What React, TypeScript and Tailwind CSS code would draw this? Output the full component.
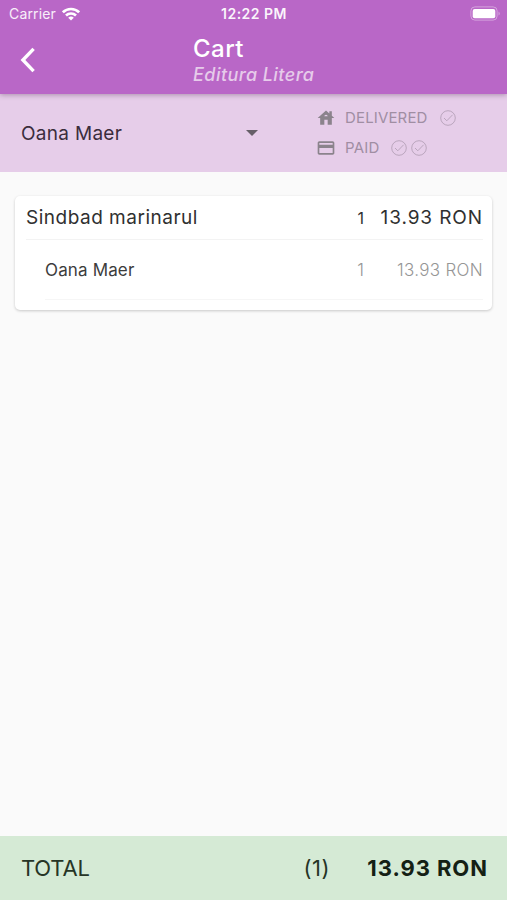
import React from "react";

function CheckCircle() {
  return (
    <svg viewBox="0 0 16 16" className="h-4 w-4 shrink-0" fill="none" stroke="#b7a3ba" strokeWidth="0.95">
      <circle cx="8" cy="8" r="7.3" />
      <path d="M4 8 6.8 10.8 12.6 4.8" />
    </svg>
  );
}

function StatusBar() {
  return (
    <div className="flex h-7 items-center">
      <div className="flex flex-1 items-center pl-[9px]">
        <span className="text-[14px] leading-none tracking-[0.15px] text-white/90">Carrier</span>
        <svg viewBox="0 0 18 14" className="ml-[6px] h-[14px] w-[18px]" fill="none" stroke="white" strokeWidth="2.6">
          <path d="M0.9 5.3a11.5 11.5 0 0 1 16.2 0" />
          <path d="M4 8.5a7.1 7.1 0 0 1 10 0" />
          <path d="M9 13.6 6.2 10.8a4 4 0 0 1 5.6 0Z" fill="white" stroke="none" />
        </svg>
      </div>
      <span className="mr-[2px] text-[14px] font-semibold leading-none tracking-[0.5px] text-white/95">12:22 PM</span>
      <div className="flex flex-1 justify-end pr-[6px] pb-px">
        <svg viewBox="0 0 31 15" className="h-[15px] w-[31px]">
          <rect x="0.9" y="0.9" width="26.2" height="13.2" rx="4" fill="none" stroke="white" strokeOpacity="0.4" />
          <rect x="2.7" y="3" width="22.6" height="9.2" rx="2" fill="white" />
          <path d="M28.6 5.4q2 2.1 0 4.2Z" fill="white" fillOpacity="0.5" />
        </svg>
      </div>
    </div>
  );
}

function Header() {
  return (
    <header className="relative z-10 h-[94px] bg-[#b967c7] shadow-[0_1px_5px_rgba(60,30,60,0.35)]">
      <StatusBar />
      <div className="flex pl-5">
        <svg viewBox="0 0 16 26" className="mt-[19px] h-[26px] w-4" fill="none" stroke="white" strokeWidth="3.4">
          <path d="M13.6 1.8 2.9 13 13.6 24.2" />
        </svg>
        <div className="ml-[157px] flex flex-col pt-[7px]">
          <h1 className="text-[24px] font-medium leading-[28px] tracking-[0.45px] text-white">Cart</h1>
          <p className="pt-px text-[18px] font-medium italic leading-[22px] tracking-[0.45px] text-[#e6cbea]">Editura Litera</p>
        </div>
      </div>
    </header>
  );
}

function Filters() {
  return (
    <section className="flex h-[78px] bg-[#e6cde9] pl-[21px]">
      <button className="flex w-[237px] items-center justify-between">
        <span className="text-[19px] leading-none tracking-[0.3px] text-[#3b2d3d]">Oana Maer</span>
        <svg viewBox="0 0 12 6" className="h-[6px] w-3" fill="#665f68">
          <path d="M0 0h12L6 6Z" />
        </svg>
      </button>
      <div className="ml-[58px] flex flex-col pt-[9px] text-[15px] text-[#a08ea3]">
        <div className="flex h-[30px] items-center">
          <svg viewBox="0 0 24 24" className="h-5 w-5" fill="#8b838c">
            <path d="M19 9.3V4h-3v2.6L12 3 2 12h3v8h5v-6h4v6h5v-8h3l-3-2.7zm-9 .7c0-1.1.9-2 2-2s2 .9 2 2h-4z" />
          </svg>
          <span className="ml-[9px] w-[95px] pt-px tracking-[0.15px]">DELIVERED</span>
          <CheckCircle />
        </div>
        <div className="flex h-[29px] items-center">
          <svg viewBox="0 0 24 24" className="h-5 w-5" fill="#8b838c">
            <path d="M20 4H4c-1.11 0-1.99.89-1.99 2L2 18c0 1.11.89 2 2 2h16c1.11 0 2-.89 2-2V6c0-1.11-.89-2-2-2zm0 14H4v-6h16v6zm0-10H4V6h16v2z" />
          </svg>
          <span className="ml-[9px] w-[46px] pt-px tracking-[0.25px]">PAID</span>
          <div className="flex gap-1">
            <CheckCircle />
            <CheckCircle />
          </div>
        </div>
      </div>
    </section>
  );
}

function OrderCard() {
  return (
    <article className="mx-[15px] mt-6 h-[114px] rounded-[5px] bg-white pl-[11px] pr-[9px] shadow-[0_1px_3px_rgba(0,0,0,0.2)]">
      <div className="flex h-[44px] items-center border-b border-[#f3f3f3] pt-[2px] text-[#303030]">
        <span className="flex-1 text-[19px] tracking-[0.5px]">Sindbad marinarul</span>
        <span className="pb-px text-[16px]">1</span>
        <span className="w-[119px] text-right text-[19px] tracking-[0.9px]">13.93 RON</span>
      </div>
      <div className="ml-[19px] flex h-[60px] items-center border-b border-[#f6f6f6] pt-[2px]">
        <span className="flex-1 text-[17px] tracking-[0.15px] text-[#3c3c3c]">Oana Maer</span>
        <span className="text-[17px] font-light text-[#969696]">1</span>
        <span className="w-[119px] text-right text-[17px] font-light tracking-[0.3px] text-[#969696]">13.93 RON</span>
      </div>
    </article>
  );
}

function TotalBar() {
  return (
    <footer className="flex h-[64px] items-center bg-[#d5ead5] pl-[21px] pr-[19px] text-[22px] text-[#263526]">
      <span className="flex-1 tracking-[-0.2px]">TOTAL</span>
      <span className="tracking-[0.5px]">(1)</span>
      <span className="w-[158px] text-right font-bold tracking-[0.95px] text-[#142014]">13.93 RON</span>
    </footer>
  );
}

export default function App() {
  return (
    <div className="flex h-screen w-full flex-col overflow-hidden bg-[#fafafa] font-['Inter','Liberation_Sans',sans-serif]">
      <Header />
      <Filters />
      <main className="flex-1">
        <OrderCard />
      </main>
      <TotalBar />
    </div>
  );
}
